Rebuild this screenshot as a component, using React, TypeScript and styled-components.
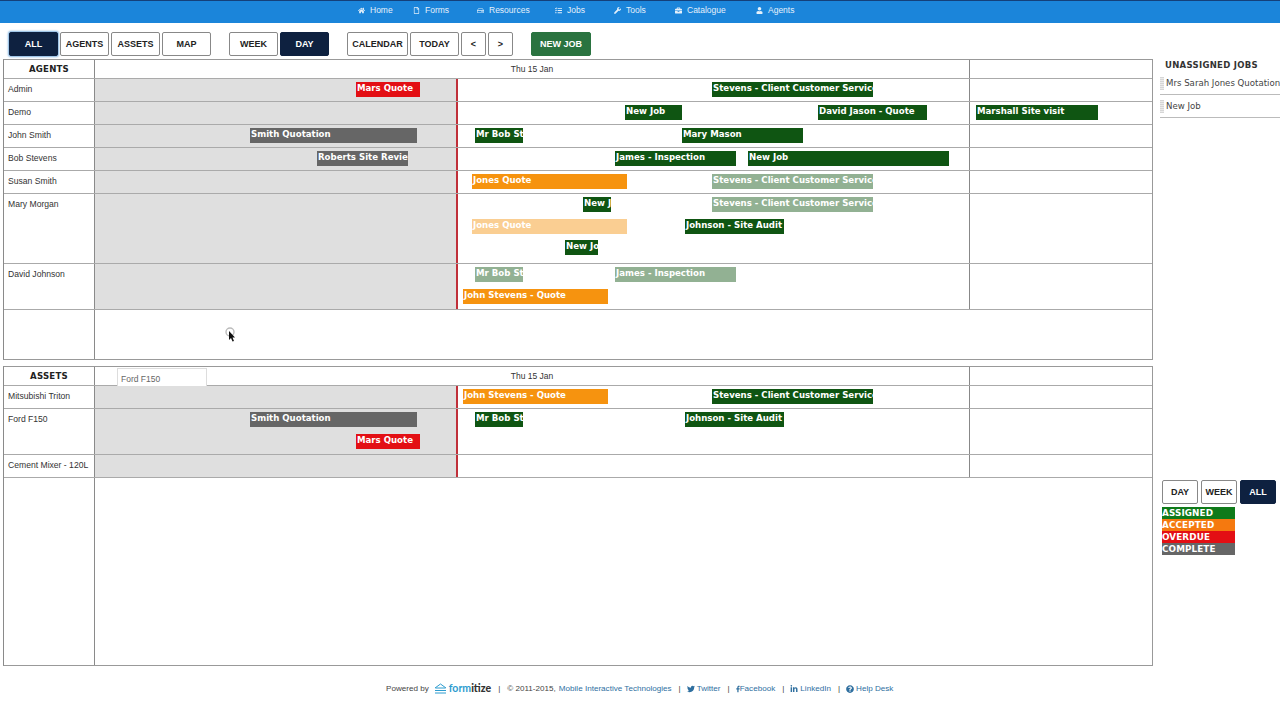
import React from "react";
import styled, { createGlobalStyle } from "styled-components";
import { FaHome, FaRegFile, FaRegHdd, FaTasks, FaWrench, FaBriefcase, FaUser, FaTwitter, FaFacebookF, FaLinkedinIn, FaQuestionCircle } from "react-icons/fa";

const Global = createGlobalStyle`
  html, body { margin: 0; padding: 0; background: #fff; overflow: hidden; }
  #root { width: 1280px; height: 720px; overflow: hidden; position: relative; }
  * { box-sizing: border-box; }
`;

const SANS = `"Liberation Sans", Arial, sans-serif`;
const WIDE = `"DejaVu Sans", Verdana, sans-serif`;

const Page = styled.div`
  width: 1280px; height: 720px; display: flex; flex-direction: column; font-family: ${SANS}; color: #333;
`;
const Nav = styled.nav`
  height: 23px; flex: none; background: #1b85da; border-top: 1px solid #14407a; display: flex; align-items: center; padding: 0 0 4px 358px;
`;
const NavItem = styled.a<{ $w: number }>`
  width: ${p => p.$w}px; flex: none; display: flex; align-items: center; color: #e4f0fa; font-size: 8.5px; line-height: 1;
  svg { width: 7px; height: 7px; flex: none; margin-right: 5px; }
`;
const Toolbar = styled.div`
  height: 36px; flex: none; display: flex; align-items: flex-start; padding: 9px 0 0 9px;
`;
const Group = styled.div`
  display: flex; gap: 2px; margin-right: 18px;
`;
const Btn = styled.button<{ $w: number; $on?: boolean; $green?: boolean; $focus?: boolean }>`
  width: ${p => p.$w}px; height: 24px; padding: 0; border-radius: 2px; font: bold 9px ${SANS};
  border: 1px solid ${p => p.$green ? "#2a7340" : p.$on ? "#0e2140" : "#888"};
  background: ${p => p.$green ? "#2a7340" : p.$on ? "#0e2140" : "#fff"};
  color: ${p => p.$green || p.$on ? "#fff" : "#222"};
  box-shadow: ${p => p.$focus ? "0 0 2px 1px #7fb2e0" : "none"};
`;
const Body = styled.div`
  flex: none; height: 607px; display: flex; padding-left: 3px;
`;
const Calendars = styled.div`
  width: 1150px; flex: none; display: flex; flex-direction: column; gap: 6px;
`;
const Section = styled.section`
  height: 301px; border: 1px solid #999; border-left-color: #8a8a8a; display: flex; flex-direction: column; position: relative;
`;
const Row = styled.div<{ $h: number }>`
  height: ${p => p.$h}px; flex: none; display: flex; border-bottom: 1px solid #aaa; position: relative;
`;
const FillRow = styled.div`
  flex: 1; display: flex;
`;
const Label = styled.div`
  width: 91px; flex: none; border-right: 1px solid #8a8a8a; padding: 5px 0 0 4px; font-size: 8.6px; line-height: 11px; color: #333; white-space: nowrap;
`;
const HeadLabel = styled.div`
  width: 91px; flex: none; border-right: 1px solid #8a8a8a; text-align: center; font: bold 8.6px/18px ${WIDE}; color: #222; letter-spacing: .2px;
`;
const HeadDate = styled.div`
  width: 875px; flex: none; border-right: 1px solid #888; text-align: center; font-size: 8.5px; line-height: 19px; color: #333;
`;
const Past = styled.div`
  width: 363px; flex: none; background: #dfdfdf; border-right: 2px solid #c0303a;
`;
const Today = styled.div`
  width: 512px; flex: none; border-right: 1px solid #888;
`;
const Bar = styled.div<{ $c: string; $fade?: boolean }>`
  position: absolute; height: 15px; overflow: hidden; white-space: nowrap; padding: 0 0 0 1px;
  background: ${p => p.$c}; opacity: ${p => p.$fade ? 0.45 : 1};
  color: #fff; font: bold 8.6px/12px ${WIDE};
`;
const Side = styled.aside`
  flex: 1; margin-left: 7px; display: flex; flex-direction: column; overflow: hidden; min-width: 0;
`;
const SideTitle = styled.h3`
  margin: 0; padding: 0 0 0 5px; height: 13px; font: bold 8.5px/12px ${WIDE}; color: #333; letter-spacing: .3px;
`;
const Job = styled.div`
  height: 23px; border-bottom: 1px solid #bbb; display: flex; align-items: flex-start; gap: 2px; padding-top: 5px; white-space: nowrap; font: 8.6px/12px ${WIDE}; color: #444;
`;
const Handle = styled.span`
  width: 4px; height: 13px; flex: none; background: repeating-linear-gradient(#d6d6d6 0 1px, #ececec 1px 2px);
`;
const Legend = styled.div`
  margin-top: auto; padding: 0 0 111px 2px; display: flex; flex-direction: column;
`;
const LegendBtns = styled.div`
  display: flex; gap: 3px; margin-bottom: 3px;
`;
const LegendBar = styled.div<{ $c: string }>`
  width: 73px; height: 12px; background: ${p => p.$c}; color: #fff; font: bold 8.8px/13px ${WIDE}; letter-spacing: .1px; overflow: hidden;
`;
const Footer = styled.footer`
  flex: 1; display: flex; align-items: flex-start; padding: 17px 0 0 386px; font-size: 8.1px; line-height: 11px; color: #444; white-space: nowrap;
`;
const Logo = styled.span`
  display: inline-flex; align-items: center; gap: 2px; margin: 0 0 0 5px; font: 900 10.5px/11px Lato, ${SANS}; color: #333;
  b { color: #2d9ccf; font-weight: 700; }
`;
const Sep = styled.span`
  margin: 0 6px 0 7px;
`;
const Copy = styled.span`
  margin: 0 3px 0 1px;
`;
const Link = styled.a<{ $tight?: boolean }>`
  color: #2f6f9f; display: inline-flex; align-items: center; gap: ${p => p.$tight ? 0 : 2}px;
  svg { width: ${p => p.$tight ? 4 : 8}px; height: 8px; flex: none; }
`;
const Tip = styled.div`
  position: absolute; left: 113px; top: 1px; width: 90px; height: 19px; background: #fff; border: 1px solid #ddd; font-size: 8.5px; line-height: 21px; padding-left: 3px; color: #666;
`;
const Pointer = styled.svg`
  position: absolute; left: 224px; top: 327px; width: 14px; height: 18px;
`;

const GREEN = "#0f5512", ORANGE = "#f6930f", RED = "#e30f14", GRAY = "#666";
type Ev = { t: string; x: number; w: number; c: string; lane?: number; fade?: boolean };
type R = { name: string; h: number; ev: Ev[] };
const SC = "Stevens - Client Customer Service";

const agents: R[] = [
  { name: "Admin", h: 23, ev: [{ t: "Mars Quote", x: 356, w: 64, c: RED }, { t: SC, x: 712, w: 161, c: GREEN }] },
  { name: "Demo", h: 23, ev: [{ t: "New Job", x: 625, w: 57, c: GREEN }, { t: "David Jason - Quote", x: 818, w: 109, c: GREEN }, { t: "Marshall Site visit", x: 976, w: 122, c: GREEN }] },
  { name: "John Smith", h: 23, ev: [{ t: "Smith Quotation", x: 250, w: 167, c: GRAY }, { t: "Mr Bob Stevens", x: 475, w: 48, c: GREEN }, { t: "Mary Mason", x: 682, w: 121, c: GREEN }] },
  { name: "Bob Stevens", h: 23, ev: [{ t: "Roberts Site Review", x: 317, w: 91, c: GRAY }, { t: "James - Inspection", x: 615, w: 121, c: GREEN }, { t: "New Job", x: 748, w: 201, c: GREEN }] },
  { name: "Susan Smith", h: 23, ev: [{ t: "Jones Quote", x: 472, w: 155, c: ORANGE }, { t: SC, x: 712, w: 161, c: GREEN, fade: true }] },
  { name: "Mary Morgan", h: 70, ev: [{ t: "New Job", x: 583, w: 28, c: GREEN }, { t: SC, x: 712, w: 161, c: GREEN, fade: true }, { t: "Jones Quote", x: 472, w: 155, c: ORANGE, lane: 1, fade: true }, { t: "Johnson - Site Audit", x: 685, w: 99, c: GREEN, lane: 1 }, { t: "New Job", x: 565, w: 33, c: GREEN, lane: 2 }] },
  { name: "David Johnson", h: 46, ev: [{ t: "Mr Bob Stevens", x: 475, w: 48, c: GREEN, fade: true }, { t: "James - Inspection", x: 615, w: 121, c: GREEN, fade: true }, { t: "John Stevens - Quote", x: 463, w: 145, c: ORANGE, lane: 1 }] },
];
const assets: R[] = [
  { name: "Mitsubishi Triton", h: 23, ev: [{ t: "John Stevens - Quote", x: 463, w: 145, c: ORANGE }, { t: SC, x: 712, w: 161, c: GREEN }] },
  { name: "Ford F150", h: 46, ev: [{ t: "Smith Quotation", x: 250, w: 167, c: GRAY }, { t: "Mr Bob Stevens", x: 475, w: 48, c: GREEN }, { t: "Johnson - Site Audit", x: 685, w: 99, c: GREEN }, { t: "Mars Quote", x: 356, w: 64, c: RED, lane: 1 }] },
  { name: "Cement Mixer - 120L", h: 23, ev: [] },
];

const Rows = ({ rows }: { rows: R[] }) => (
  <>
    {rows.map(r => (
      <Row key={r.name} $h={r.h}>
        <Label>{r.name}</Label>
        <Past />
        <Today />
        {r.ev.map((e, i) => (
          <Bar key={i} $c={e.c} $fade={e.fade} style={{ left: e.x - 4, width: e.w, top: 3 + Math.round((e.lane ?? 0) * 21.7) }}>{e.t}</Bar>
        ))}
      </Row>
    ))}
  </>
);

export default function App() {
  return (
    <Page>
      <Global />
      <Nav>
        <NavItem $w={55}><FaHome />Home</NavItem>
        <NavItem $w={64}><FaRegFile />Forms</NavItem>
        <NavItem $w={78}><FaRegHdd />Resources</NavItem>
        <NavItem $w={59}><FaTasks />Jobs</NavItem>
        <NavItem $w={61}><FaWrench />Tools</NavItem>
        <NavItem $w={81}><FaBriefcase />Catalogue</NavItem>
        <NavItem $w={40}><FaUser />Agents</NavItem>
      </Nav>
      <Toolbar>
        <Group>
          <Btn $w={49} $on $focus>ALL</Btn>
          <Btn $w={49}>AGENTS</Btn>
          <Btn $w={49}>ASSETS</Btn>
          <Btn $w={49}>MAP</Btn>
        </Group>
        <Group>
          <Btn $w={49}>WEEK</Btn>
          <Btn $w={49} $on>DAY</Btn>
        </Group>
        <Group>
          <Btn $w={61}>CALENDAR</Btn>
          <Btn $w={49}>TODAY</Btn>
          <Btn $w={25}>&lt;</Btn>
          <Btn $w={25}>&gt;</Btn>
        </Group>
        <Btn $w={60} $green>NEW JOB</Btn>
      </Toolbar>
      <Body>
        <Calendars>
          <Section>
            <Row $h={19}><HeadLabel>AGENTS</HeadLabel><HeadDate>Thu 15 Jan</HeadDate></Row>
            <Rows rows={agents} />
            <FillRow><Label /></FillRow>
          </Section>
          <Section>
            <Row $h={19}>
              <HeadLabel>ASSETS</HeadLabel><HeadDate>Thu 15 Jan</HeadDate>
              <Tip>Ford F150</Tip>
            </Row>
            <Rows rows={assets} />
            <FillRow><Label /></FillRow>
          </Section>
        </Calendars>
        <Side>
          <SideTitle>UNASSIGNED JOBS</SideTitle>
          <Job><Handle />Mrs Sarah Jones Quotation</Job>
          <Job><Handle />New Job</Job>
          <Legend>
            <LegendBtns>
              <Btn $w={36}>DAY</Btn>
              <Btn $w={36}>WEEK</Btn>
              <Btn $w={36} $on>ALL</Btn>
            </LegendBtns>
            <LegendBar $c="#0f7a1a">ASSIGNED</LegendBar>
            <LegendBar $c="#f5790f">ACCEPTED</LegendBar>
            <LegendBar $c="#e30f14">OVERDUE</LegendBar>
            <LegendBar $c="#666">COMPLETE</LegendBar>
          </Legend>
        </Side>
      </Body>
      <Footer>
        Powered by
        <Logo>
          <svg width="13" height="11" viewBox="0 0 13 11" fill="none" stroke="#2d9ccf" strokeWidth="1">
            <path d="M1 5 L6.5 1 L12 5 M1.5 5 H11.5 M1 7.5 H12 M1 10 H12" />
          </svg>
          <span><b>form</b>itize</span>
        </Logo>
        <Sep>|</Sep><Copy>© 2011-2015,</Copy><Link>Mobile Interactive Technologies</Link>
        <Sep>|</Sep><Link><FaTwitter />Twitter</Link>
        <Sep>|</Sep><Link $tight><FaFacebookF />Facebook</Link>
        <Sep>|</Sep><Link><FaLinkedinIn />LinkedIn</Link>
        <Sep>|</Sep><Link><FaQuestionCircle />Help Desk</Link>
      </Footer>
      <Pointer viewBox="0 0 14 18">
        <circle cx="6" cy="5" r="4" fill="none" stroke="#bbb" strokeWidth="1.4" />
        <path d="M5 4 L5 13 L7 11 L8.5 14.5 L10 14 L8.5 10.5 L11 10.5 Z" fill="#111" />
      </Pointer>
    </Page>
  );
}
